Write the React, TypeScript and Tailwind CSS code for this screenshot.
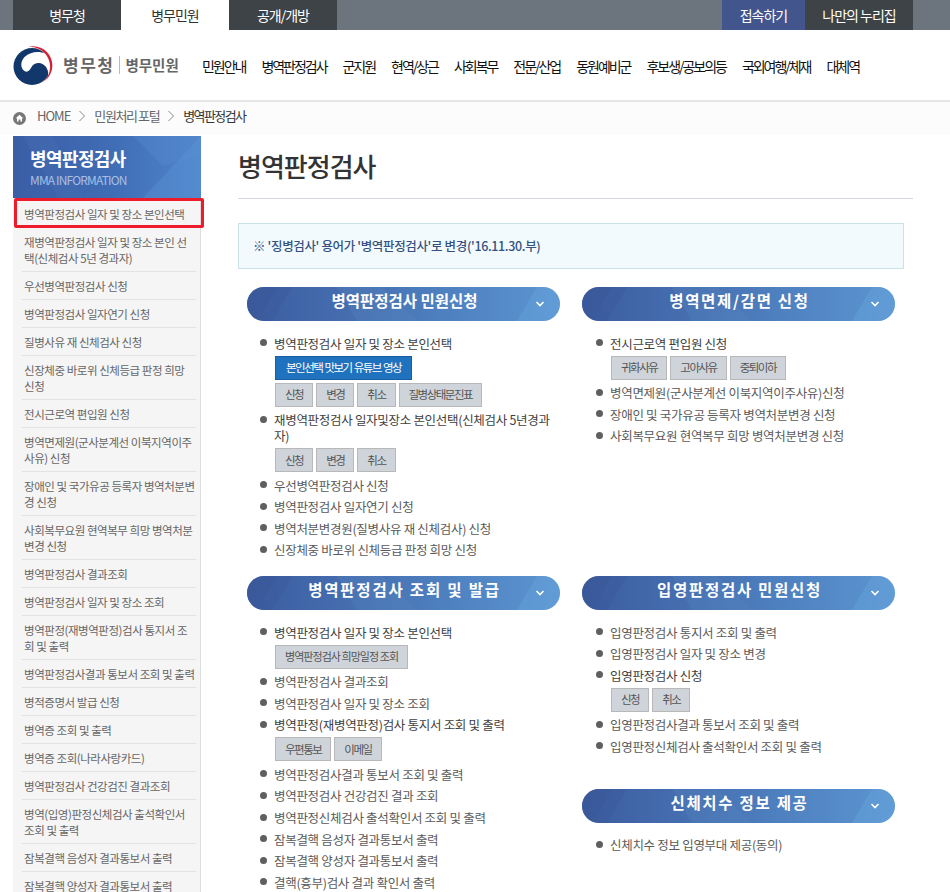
const KR = "font-['Noto_Sans_CJK_KR','Noto_Sans',sans-serif]";

const topLeft = ["병무청", "병무민원", "공개/개방"];
const nav = [
  "민원안내",
  "병역판정검사",
  "군지원",
  "현역/상근",
  "사회복무",
  "전문/산업",
  "동원예비군",
  "후보생/공보의등",
  "국외여행/체재",
  "대체역",
];
const sideItems = [
  "병역판정검사 일자 및 장소 본인선택",
  "재병역판정검사 일자 및 장소 본인 선택(신체검사 5년 경과자)",
  "우선병역판정검사 신청",
  "병역판정검사 일자연기 신청",
  "질병사유 재 신체검사 신청",
  "신장체중 바로위 신체등급 판정 희망 신청",
  "전시근로역 편입원 신청",
  "병역면제원(군사분계선 이북지역이주사유) 신청",
  "장애인 및 국가유공 등록자 병역처분변경 신청",
  "사회복무요원 현역복무 희망 병역처분변경 신청",
  "병역판정검사 결과조회",
  "병역판정검사 일자 및 장소 조회",
  "병역판정(재병역판정)검사 통지서 조회 및 출력",
  "병역판정검사결과 통보서 조회 및 출력",
  "병적증명서 발급 신청",
  "병역증 조회 및 출력",
  "병역증 조회(나라사랑카드)",
  "병역판정검사 건강검진 결과조회",
  "병역(입영)판정신체검사 출석확인서 조회 및 출력",
  "잠복결핵 음성자 결과통보서 출력",
  "잠복결핵 양성자 결과통보서 출력",
];

function Buttons({ items, small }: { items: string[]; small?: boolean }) {
  return (
    <div className="flex gap-[3px] h-[24px]">
      {items.map((b) => (
        <span
          key={b}
          className={`flex items-center justify-center h-[24px] px-[9px] bg-[#cfd4da] border border-[#b8b8b8] text-[#555] whitespace-nowrap ${
            small ? "text-[11px] tracking-[-0.95px]" : "text-[11.5px] tracking-[-1.5px]"
          }`}
        >
          {b}
        </span>
      ))}
    </div>
  );
}

function Li({ children, sub }: { children: React.ReactNode; sub?: React.ReactNode }) {
  return (
    <li className="relative pl-[27px] pr-[2px]">
      <span className="absolute left-[13px] top-[6px] w-[7px] h-[7px] rounded-full bg-[#5f5f5f]" />
      <div className={`text-[12.5px] leading-[16px] pt-[2.5px] pb-[3.1px] tracking-[-0.3px] ${sub ? "text-[#404040]" : "text-[#5a5a5a]"}`}>
        {children}
      </div>
      {sub && <div className="ml-[1px] pt-[1px] pb-[3px] flex flex-col gap-[3px]">{sub}</div>}
    </li>
  );
}

function Pill({ title, spacing }: { title: string; spacing: string }) {
  return (
    <div className="relative flex items-center justify-center w-[313px] h-[34px] rounded-full overflow-hidden bg-gradient-to-r from-[#3c5ca0] via-[#4a78b8] to-[#5b96d2]">
      <svg className="absolute inset-0" width="313" height="34" viewBox="0 0 313 34">
        <polygon points="0,34 0,0 30,0 10,34" fill="#3a5a9e" opacity="0.4" />
        <polygon points="0,0 45,0 25,34 0,34" fill="#36558f" opacity="0.25" />
        <polygon points="90,0 135,0 170,34 110,34" fill="#5a86c0" opacity="0.25" />
        <polygon points="270,34 290,0 313,0 313,34" fill="#6aa4dc" opacity="0.4" />
      </svg>
      <span className={`relative pl-[2px] pb-[7px] text-white text-[15.5px] font-bold whitespace-nowrap ${spacing}`}>
        {title}
      </span>
      <svg className="absolute right-[15px] top-[13px]" width="10" height="8" viewBox="0 0 10 8" fill="none">
        <path d="M1.500 2l3.500 3.500L8.500 2" stroke="#fff" strokeWidth="1.6" />
      </svg>
    </div>
  );
}

function Logo() {
  return (
    <svg width="41" height="40" viewBox="0 0 40 40" className="shrink-0">
      <circle cx="18.5" cy="21.5" r="18.5" fill="#12386b" />
      <path
        d="M31.600 8.400C26.500 6 17 6 11 12 7 16 6.500 23 11 26c3 2 5.500-1 7-4 2-3.500 7-5 11-3 4 2 6.500 7 5.500 12L40 40V0z"
        fill="#fff"
      />
      <path d="M14 2A19.400 19.400 0 0 1 29 37.500 20 20 0 0 0 14 2z" fill="#d41f36" />
    </svg>
  );
}

export default function App() {
  return (
    <div className={`${KR} w-[950px] h-[892px] overflow-hidden bg-white`}>
      {/* top bar */}
      <div className="flex justify-between h-[30px] bg-[#6c757d] pl-[13px] pr-[37px] text-[14px] tracking-[-1px]">
        <div className="flex">
          {topLeft.map((t, i) => (
            <a
              key={t}
              className={`flex items-center justify-center h-[30px] w-[108px] ${
                i === 1 ? "bg-white text-[#333]" : "bg-[#3e4347] text-white"
              }`}
            >
              {t}
            </a>
          ))}
        </div>
        <div className="flex text-white">
          <a className="flex items-center justify-center w-[83px] bg-[#42558c]">접속하기</a>
          <a className="flex items-center justify-center w-[108px] bg-[#3e4347]">나만의 누리집</a>
        </div>
      </div>

      {/* logo + nav */}
      <div className="flex items-center h-[70px] pl-[13px]">
        <Logo />
        <div className="flex items-center ml-[9px] w-[139px] text-[#666]">
          <span className="text-[17px] font-bold tracking-[1.5px] whitespace-nowrap">병무청</span>
          <span className="w-px h-[18px] bg-[#bbb] mx-[5px]" />
          <span className="text-[14.5px] font-bold whitespace-nowrap">병무민원</span>
        </div>
        <ul className="flex gap-[16px] text-[14px] text-[#111] tracking-[-2.03px] whitespace-nowrap pt-[2px]">
          {nav.map((n) => (
            <li key={n}>{n}</li>
          ))}
        </ul>
      </div>

      {/* breadcrumb */}
      <div className="flex items-center h-[35px] pb-[5px] border-t-2 border-[#e6e6e6] bg-[#fcfcfc] pl-[13px] text-[13px] tracking-[-1px] text-[#666]">
        <svg width="13" height="13" viewBox="0 0 13 13" className="mt-[4px]">
          <circle cx="6.500" cy="6.500" r="6.500" fill="#777" />
          <path d="M6.500 2.800L10.300 6.300H9v3.200H7.400V7.500H5.600v2H4V6.300H2.700z" fill="#fff" />
        </svg>
        <span className="ml-[11px]">HOME</span>
        <svg width="8" height="12" viewBox="0 0 8 12" fill="none" className="mx-[8px]">
          <path d="M1.500 1l5 5-5 5" stroke="#888" />
        </svg>
        <span className="tracking-[-1.4px]">민원처리 포털</span>
        <svg width="8" height="12" viewBox="0 0 8 12" fill="none" className="mx-[8px]">
          <path d="M1.500 1l5 5-5 5" stroke="#888" />
        </svg>
        <span className="text-[#333] tracking-[-1.6px]">병역판정검사</span>
      </div>

      <div className="flex pl-[13px] pr-[37px] gap-[37px]">
        {/* sidebar */}
        <aside className="relative w-[188px] shrink-0 mt-[1px]">
          <div className="relative h-[62px] overflow-hidden bg-gradient-to-r from-[#3a5ea6] via-[#3f6cb4] to-[#4f85cc] pl-[17px] pt-[10px]">
            <svg className="absolute inset-0" width="188" height="62" viewBox="0 0 188 62">
              <polygon points="10,0 40,0 70,62 45,62" fill="#4a6fb4" opacity="0.35" />
              <polygon points="130,62 188,0 188,62" fill="#5f97d8" opacity="0.35" />
              <polygon points="120,0 188,0 188,20 150,30" fill="#5a90d0" opacity="0.3" />
            </svg>
            <div className="relative text-[18px] leading-[24px] font-bold text-white tracking-[-0.6px]">병역판정검사</div>
            <div className="relative text-[12px] leading-[16px] mt-[2px] text-[#a9bfe4] tracking-[-0.85px]">MMA INFORMATION</div>
          </div>
          <ul className="bg-[#f5f5f5] border-r border-[#ddd] px-[9px] pt-[2px] h-[760px] text-[11.5px] leading-[16px] text-[#666] tracking-[-0.45px] break-all">
            {sideItems.map((s) => (
              <li key={s} className="pt-[6px] pb-[5px] border-b border-[#e2e2e2] pl-[2px] w-[174px]">
                {s}
              </li>
            ))}
          </ul>
          <div className="absolute left-[1px] top-[62px] w-[190px] h-[30px] border-[3px] border-[#ee1c2b] rounded-[2px]" />
        </aside>

        {/* main */}
        <main className="flex-1 min-w-0">
          <h1 className="h-[64px] pt-[12px] text-[26px] leading-[38px] font-medium text-[#333] tracking-[-1px] border-b border-[#d6d6de]">
            병역판정검사
          </h1>
          <div className="mt-[24px] mr-[9px] h-[46px] flex items-center pl-[14px] bg-[#f3fafd] border border-[#c9e3e8] text-[12.5px] font-medium text-[#33527f] tracking-[-0.35px]">
            ※ '징병검사' 용어가 '병역판정검사'로 변경('16.11.30.부)
          </div>

          <div className="grid grid-cols-[313px_313px] gap-x-[22px] ml-[9px] mt-[18px]">
            <section>
              <Pill title="병역판정검사 민원신청" spacing="tracking-[0px]" />
              <ul className="mt-[12px] h-[243px]">
                <Li
                  sub={
                    <>
                      <div className="h-[24px] flex">
                        <span className="flex items-center px-[10px] h-[24px] bg-[#1f72bd] border border-[#1a5da0] text-[11.5px] text-white tracking-[-1.5px] [word-spacing:1px]">
                          본인선택 맛보기 유튜브 영상
                        </span>
                      </div>
                      <Buttons items={["신청", "변경", "취소", "질병상태문진표"]} />
                    </>
                  }
                >
                  병역판정검사 일자 및 장소 본인선택
                </Li>
                <Li sub={<Buttons items={["신청", "변경", "취소"]} />}>
                  재병역판정검사 일자및장소 본인선택(신체검사 5년경과자)
                </Li>
                <Li>우선병역판정검사 신청</Li>
                <Li>병역판정검사 일자연기 신청</Li>
                <Li>병역처분변경원(질병사유 재 신체검사) 신청</Li>
                <Li>신장체중 바로위 신체등급 판정 희망 신청</Li>
              </ul>
            </section>
            <section>
              <Pill title="병역면제/감면 신청" spacing="tracking-[1.7px]" />
              <ul className="mt-[12px] ml-[1px]">
                <Li sub={<Buttons items={["귀화사유", "고아사유", "중퇴이하"]} />}>전시근로역 편입원 신청</Li>
                <Li>병역면제원(군사분계선 이북지역이주사유)신청</Li>
                <Li>장애인 및 국가유공 등록자 병역처분변경 신청</Li>
                <Li>사회복무요원 현역복무 희망 병역처분변경 신청</Li>
              </ul>
            </section>
            <section>
              <Pill title="병역판정검사 조회 및 발급" spacing="tracking-[1.8px]" />
              <ul className="mt-[12px]">
                <Li sub={<Buttons small items={["병역판정검사 희망일정 조회"]} />}>병역판정검사 일자 및 장소 본인선택</Li>
                <Li>병역판정검사 결과조회</Li>
                <Li>병역판정검사 일자 및 장소 조회</Li>
                <Li sub={<Buttons items={["우편통보", "이메일"]} />}>병역판정(재병역판정)검사 통지서 조회 및 출력</Li>
                <Li>병역판정검사결과 통보서 조회 및 출력</Li>
                <Li>병역판정검사 건강검진 결과 조회</Li>
                <Li>병역판정신체검사 출석확인서 조회 및 출력</Li>
                <Li>잠복결핵 음성자 결과통보서 출력</Li>
                <Li>잠복결핵 양성자 결과통보서 출력</Li>
                <Li>결핵(흉부)검사 결과 확인서 출력</Li>
              </ul>
            </section>
            <section>
              <Pill title="입영판정검사 민원신청" spacing="tracking-[1.7px]" />
              <ul className="mt-[12px] ml-[1px]">
                <Li>입영판정검사 통지서 조회 및 출력</Li>
                <Li>입영판정검사 일자 및 장소 변경</Li>
                <Li sub={<Buttons items={["신청", "취소"]} />}>입영판정검사 신청</Li>
                <Li>입영판정검사결과 통보서 조회 및 출력</Li>
                <Li>입영판정신체검사 출석확인서 조회 및 출력</Li>
              </ul>
              <div className="mt-[31px]">
                <Pill title="신체치수 정보 제공" spacing="tracking-[1.7px]" />
                <ul className="mt-[12px] ml-[1px]">
                  <Li>신체치수 정보 입영부대 제공(동의)</Li>
                </ul>
              </div>
            </section>
          </div>
        </main>
      </div>
    </div>
  );
}
